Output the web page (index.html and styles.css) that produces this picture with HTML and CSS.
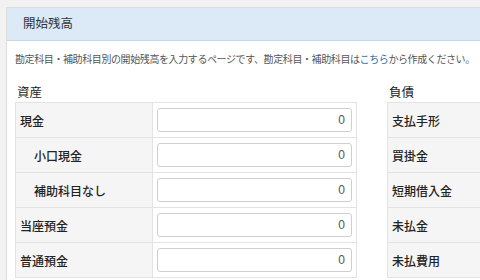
FILE: index.html
```html
<!DOCTYPE html>
<html lang="ja">
<head>
<meta charset="utf-8">
<link rel="stylesheet" href="styles.css">
</head>
<body>
<div class="panel">
  <div class="panel-head">開始残高</div>
  <div class="panel-body">
    <p class="desc">勘定科目・補助科目別の開始残高を入力するページです、勘定科目・補助科目は<a href="#" class="link">こちら</a>から作成ください。</p>
    <div class="cols">
      <div class="col col-left">
        <div class="col-title">資産</div>
        <table class="tbl">
          <tr><th>現金</th><td><input class="num" value="0"></td></tr>
          <tr><th class="sub">小口現金</th><td><input class="num" value="0"></td></tr>
          <tr><th class="sub">補助科目なし</th><td><input class="num" value="0"></td></tr>
          <tr><th>当座預金</th><td><input class="num" value="0"></td></tr>
          <tr><th>普通預金</th><td><input class="num" value="0"></td></tr>
        </table>
      </div>
      <div class="col col-right">
        <div class="col-title">負債</div>
        <table class="tbl tbl-right">
          <tr><th>支払手形</th><td></td></tr>
          <tr><th>買掛金</th><td></td></tr>
          <tr><th>短期借入金</th><td></td></tr>
          <tr><th>未払金</th><td></td></tr>
          <tr><th>未払費用</th><td></td></tr>
        </table>
      </div>
    </div>
  </div>
</div>
</body>
</html>
```
FILE: styles.css
```css
html, body {
  margin: 0;
  padding: 0;
}
body {
  background: #f2f2f2;
  font-family: "Noto Sans CJK JP", "Liberation Sans", sans-serif;
  color: #333;
  width: 480px;
  height: 280px;
  overflow: hidden;
}
.panel {
  margin: 7px 0 0 6px;
  width: 600px;
  background: #fff;
  border: 1px solid #dcdcdc;
  border-right: none;
  height: 400px;
}
.panel-head {
  height: 32px;
  background: #dce9f7;
  border-bottom: 1px solid #c7d8ea;
  font-size: 12.5px;
  line-height: 30px;
  padding-left: 16px;
  color: #333;
}
.panel-body {
  padding: 0 0 0 8px;
}
.desc {
  margin: 0;
  padding-top: 10px;
  font-size: 10px;
  letter-spacing: -0.4px;
  line-height: 16px;
  color: #555;
  white-space: nowrap;
}
.link {
  color: #2d6fb0;
  text-decoration: none;
}
.cols {
  display: flex;
  gap: 30px;
  margin-top: 15px;
}
.col-left {
  width: 342px;
}
.col-right {
  flex: 1;
}
.col-title {
  font-size: 12.5px;
  line-height: 20px;
  height: 20px;
  padding-left: 2px;
  color: #222;
}
.tbl {
  border-collapse: collapse;
  width: 100%;
  border-top: 1px solid #e3e3e3;
}
.tbl th, .tbl td {
  border: 1px solid #e3e3e3;
  height: 34px;
  padding: 0;
}
.tbl th {
  background: #f5f5f5;
  text-align: left;
  font-size: 12px;
  font-weight: 500;
  padding-left: 4px;
  width: 134px;
  color: #222;
}
.tbl th.sub {
  padding-left: 18px;
}
.tbl td {
  background: #fff;
  padding: 0 4px;
}
.num {
  display: block;
  box-sizing: border-box;
  width: 195px;
  height: 24px;
  border: 1px solid #cfcfcf;
  border-radius: 3px;
  font-family: "Liberation Sans", sans-serif;
  font-size: 12px;
  color: #555;
  text-align: right;
  padding: 0 6px;
  background: #fff;
}
.tbl-right th {
  width: 120px;
}
.tbl-right td {
  background: #f5f5f5;
}
```
